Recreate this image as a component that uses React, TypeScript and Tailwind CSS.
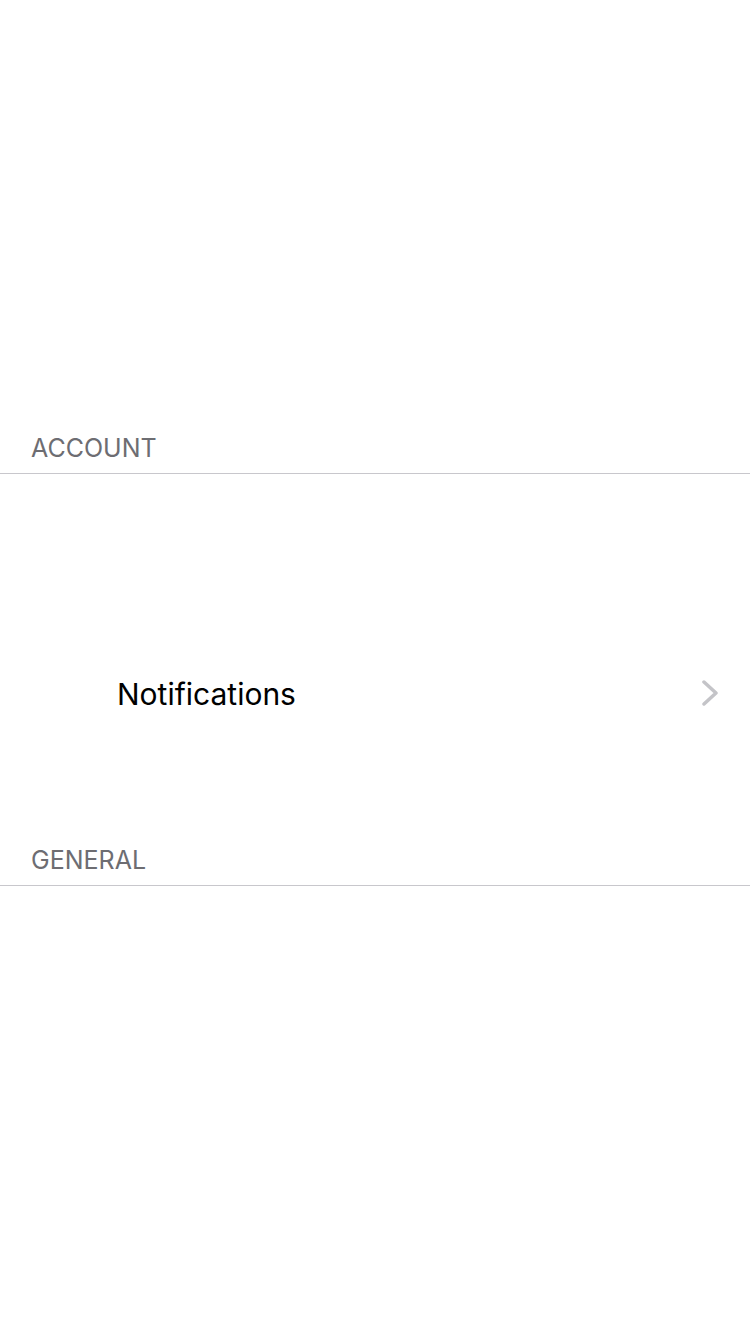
import React from 'react';

/**
 * Grey uppercase section caption with a hairline under it.
 */
function SectionHeader({ title, className }: { title: string; className: string }) {
  return (
    <div
      className={`box-border flex items-end border-b border-[#c8c7cc] px-[31px] pb-[9px] ${className}`}
    >
      <span className="text-[25px] leading-[32px] text-[#6d6d72]">{title}</span>
    </div>
  );
}

export default function App() {
  return (
    <div
      className="min-h-[1334px] w-full bg-white"
      style={{ fontFamily: 'Inter, "Noto Sans", sans-serif' }}
    >
      <SectionHeader title="ACCOUNT" className="h-[474px]" />

      <div className="pt-[200px]">
        <div className="flex h-[40px] items-center pl-[117px] pr-[30px]">
          <span className="flex-1 text-[30px] leading-[40px] text-black">Notifications</span>
          <svg width="20" height="28" viewBox="0 0 20 28" fill="none">
            <polyline
              points="4,2 16,13 4,24"
              stroke="#c4c4c8"
              strokeWidth="3.5"
              strokeLinecap="round"
              strokeLinejoin="round"
            />
          </svg>
        </div>
      </div>

      <SectionHeader title="GENERAL" className="h-[172px]" />
    </div>
  );
}
